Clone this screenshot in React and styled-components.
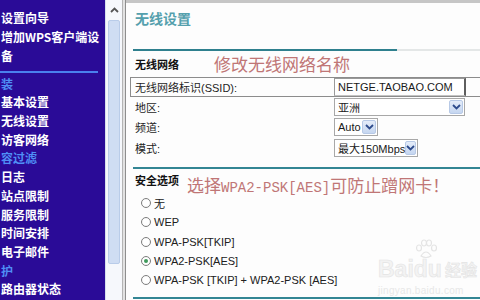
import styled, { createGlobalStyle } from "styled-components";

const GlobalStyle = createGlobalStyle`
  html, body {
    margin: 0;
    padding: 0;
    background: #fff;
    overflow: hidden;
  }
`;

const Page = styled.div`
  display: flex;
  width: 480px;
  height: 300px;
  overflow: hidden;
  font-family: "Liberation Sans", "Noto Sans CJK SC", sans-serif;
`;

const Nav = styled.div`
  width: 105px;
  flex: none;
  background: #2a0b97;
  padding-top: 8px;
  overflow: hidden;
  box-sizing: border-box;
`;

const NavItem = styled.div`
  font-family: "Noto Sans CJK SC", sans-serif;
  font-size: 12px;
  font-weight: 700;
  line-height: ${p => (p.$tall ? "19px" : "18.7px")};
  color: ${p => (p.$head ? "#4f8ff5" : "#fff")};
  padding-left: 1px;
  white-space: nowrap;
`;

const NavRule = styled.div`
  height: 2px;
  width: 98px;
  margin: 6px 0 1.6px;
  background: #4a80ee;
`;

const Scroll = styled.div`
  width: 17px;
  flex: none;
  background: #f6f8fc;
  border-left: 1px solid #d6dfed;
  box-sizing: border-box;
  padding: 0 2px;
  display: flex;
  flex-direction: column;
`;

const ScrollArrow = styled.div`
  height: 19px;
  display: flex;
  align-items: center;
  justify-content: center;
`;

const ScrollThumb = styled.div`
  height: 242px;
  margin-top: 1px;
  background: #cfddf3;
  border: 1px solid #b9cce9;
  border-radius: 2px;
`;

const Splitter = styled.div`
  width: 4px;
  flex: none;
  background: #e2e2e2;
  border-left: 1px solid #b4b4b4;
  border-right: 1px solid #8e8e8e;
  box-sizing: border-box;
`;

const Content = styled.div`
  flex: 1;
  position: relative;
  background: #fdfdfd;
  border-top: 3px solid #c6c6c6;
  padding-left: 9px;
  color: #1a1a1a;
  font-size: 11px;
`;

const Title = styled.div`
  margin-top: 5px;
  font-family: "Noto Sans CJK SC", sans-serif;
  font-size: 14px;
  font-weight: 700;
  line-height: 20px;
  color: #55a0ad;
`;

const Rule = styled.div`
  height: 2px;
  margin: ${p => p.$m || "0"};
  margin-left: -2px;
  background: ${p =>
    p.$short
      ? "linear-gradient(90deg, #2f808e 0, #2f808e 264px, #e4e7e7 264px)"
      : "#338694"};
`;

const SectionRow = styled.div`
  display: flex;
  align-items: flex-start;
  height: ${p => p.$h}px;
  margin-top: ${p => p.$mt}px;
`;

const SectionLabel = styled.div`
  font-family: "Noto Sans CJK SC", sans-serif;
  font-weight: 700;
  font-size: 11px;
  line-height: ${p => p.$lh}px;
  color: #111;
`;

const Note = styled.div`
  margin-left: ${p => p.$ml}px;
  margin-top: ${p => p.$mt}px;
  font-family: "Noto Sans CJK SC", sans-serif;
  font-size: 17px;
  line-height: 20px;
  color: #c07676;
  white-space: nowrap;
`;

const NoteMono = styled.span`
  font-family: "Liberation Mono", monospace;
  font-size: 14px;
`;

const FormRow = styled.div`
  display: flex;
  align-items: center;
  height: ${p => p.$h || 20}px;
  margin-top: ${p => p.$mt || 0}px;
  white-space: nowrap;
`;

const FramedRow = styled(FormRow)`
  margin-left: -5px;
  padding-left: 4px;
  border: 1px solid #8c8c8c;
  border-right: none;
  box-sizing: border-box;
`;

const Label = styled.div`
  width: 199px;
  flex: none;
  color: #1e1e1e;
`;

const Input = styled.div`
  width: 132px;
  height: 18px;
  box-sizing: border-box;
  border: 1px solid #9a9a9a;
  border-right: 2px solid #5e5e5e;
  border-bottom-color: #c4c4c4;
  padding-left: 3px;
  display: flex;
  align-items: center;
  background: #fff;
`;

const Select = styled.div`
  width: ${p => p.$w}px;
  height: 18px;
  box-sizing: border-box;
  border: 1px solid #a8a8a8;
  padding: 0 1px 0 3px;
  display: flex;
  align-items: center;
  background: #fff;
`;

const SelectArrow = styled.div`
  margin-left: auto;
  width: 14px;
  height: 14px;
  box-sizing: border-box;
  border: 1px solid #b7c9e6;
  border-radius: 2px;
  background: linear-gradient(#e4ecf9, #c5d6f0);
  display: flex;
  align-items: center;
  justify-content: center;
`;

const RadioRow = styled.div`
  display: flex;
  align-items: center;
  height: 19.25px;
  padding-left: 6px;
  color: #202020;
  white-space: nowrap;
  &:first-of-type {
    margin-top: 0.4px;
  }
`;

const RadioList = styled.div``;

const Radio = styled.span`
  width: 10px;
  height: 10px;
  box-sizing: border-box;
  border-radius: 50%;
  border: 1px solid #7e7e7e;
  background: radial-gradient(circle, #fff 50%, #ececec 100%);
  margin-right: 3px;
  display: flex;
  align-items: center;
  justify-content: center;
  &::after {
    content: "";
    width: 4px;
    height: 4px;
    border-radius: 50%;
    background: ${p => (p.$on ? "#3f9a5c" : "transparent")};
  }
`;

const Watermark = styled.div`
  position: absolute;
  left: 252px;
  top: 236px;
  display: flex;
  flex-direction: column;
  align-items: flex-start;
  pointer-events: none;
`;

const WatermarkBrand = styled.div`
  display: flex;
  align-items: flex-end;
  font-family: "Liberation Sans", sans-serif;
  font-size: 23px;
  font-weight: 700;
  line-height: 24px;
  color: #f3f3f3;
  -webkit-text-stroke: 0.6px #e4e4e4;
  span {
    font-family: "Noto Sans CJK SC", sans-serif;
    font-size: 16px;
    margin-left: 3px;
  }
`;

const WatermarkUrl = styled.div`
  font-size: 10px;
  margin-top: 4px;
  color: #e8e8e8;
  letter-spacing: 0.3px;
`;

const Chevron = ({ up }) => (
  <svg width="9" height="6" viewBox="0 0 9 6">
    <path
      d={up ? "M1 5 L4.5 1.5 L8 5" : "M1 1 L4.5 4.5 L8 1"}
      fill="none"
      stroke={up ? "#555" : "#2d4b8c"}
      strokeWidth="1.8"
    />
  </svg>
);

const Paw = () => (
  <svg width="24" height="20" viewBox="0 0 24 20" style={{ marginLeft: 36, marginBottom: -2 }}>
    <g fill="none" stroke="#e4e4e4" strokeWidth="1.2">
      <ellipse cx="5" cy="9" rx="2.5" ry="3" />
      <ellipse cx="10" cy="4" rx="2.5" ry="3" />
      <ellipse cx="15" cy="4" rx="2.5" ry="3" />
      <ellipse cx="20" cy="9" rx="2.5" ry="3" />
      <path d="M7 17 Q12 9 17 17 Q12 20 7 17 Z" />
    </g>
  </svg>
);

const navTop = ["设置向导", "增加WPS客户端设", "备"];

const navRest = [
  { t: "装", head: true },
  { t: "基本设置" },
  { t: "无线设置" },
  { t: "访客网络" },
  { t: "容过滤", head: true },
  { t: "日志" },
  { t: "站点限制" },
  { t: "服务限制" },
  { t: "时间安排" },
  { t: "电子邮件" },
  { t: "护", head: true },
  { t: "路由器状态" },
];

const security = [
  { t: "无" },
  { t: "WEP" },
  { t: "WPA-PSK[TKIP]" },
  { t: "WPA2-PSK[AES]", on: true },
  { t: "WPA-PSK [TKIP] + WPA2-PSK [AES]" },
];

export default function App() {
  return (
    <Page>
      <GlobalStyle />
      <Nav>
        {navTop.map(t => (
          <NavItem key={t} $tall>{t}</NavItem>
        ))}
        <NavRule />
        {navRest.map(n => (
          <NavItem key={n.t} $head={n.head}>{n.t}</NavItem>
        ))}
      </Nav>
      <Scroll>
        <ScrollArrow><Chevron up /></ScrollArrow>
        <ScrollThumb />
      </Scroll>
      <Splitter />
      <Content>
        <Title>无线设置</Title>
        <Rule $short $m="21px 0 0" />

        <SectionRow $h={20} $mt={3}>
          <SectionLabel $lh={20}>无线网络</SectionLabel>
          <Note $ml={35} $mt={0}>修改无线网络名称</Note>
        </SectionRow>

        <FramedRow $h={20} $mt={3}>
          <Label>无线网络标识(SSID):</Label>
          <Input>NETGE.TAOBAO.COM</Input>
        </FramedRow>
        <FormRow>
          <Label>地区:</Label>
          <Select $w={131}>亚洲<SelectArrow><Chevron /></SelectArrow></Select>
        </FormRow>
        <FormRow>
          <Label>频道:</Label>
          <Select $w={44}>Auto<SelectArrow><Chevron /></SelectArrow></Select>
        </FormRow>
        <FormRow $mt={1}>
          <Label>模式:</Label>
          <Select $w={84}>最大150Mbps<SelectArrow><Chevron /></SelectArrow></Select>
        </FormRow>

        <Rule $m="9px 0 0" />

        <SectionRow $h={21} $mt={3}>
          <SectionLabel $lh={16}>安全选项</SectionLabel>
          <Note $ml={8} $mt={3}>
            选择<NoteMono>WPA2-PSK[AES]</NoteMono>可防止蹭网卡！
          </Note>
        </SectionRow>

        <RadioList>
          {security.map(s => (
            <RadioRow key={s.t}>
              <Radio $on={s.on} />
              {s.t}
            </RadioRow>
          ))}
        </RadioList>

        <Rule $m="7px 0 0" />

        <Watermark>
          <Paw />
          <WatermarkBrand>Baidu<span>经验</span></WatermarkBrand>
          <WatermarkUrl>jingyan.baidu.com</WatermarkUrl>
        </Watermark>
      </Content>
    </Page>
  );
}
